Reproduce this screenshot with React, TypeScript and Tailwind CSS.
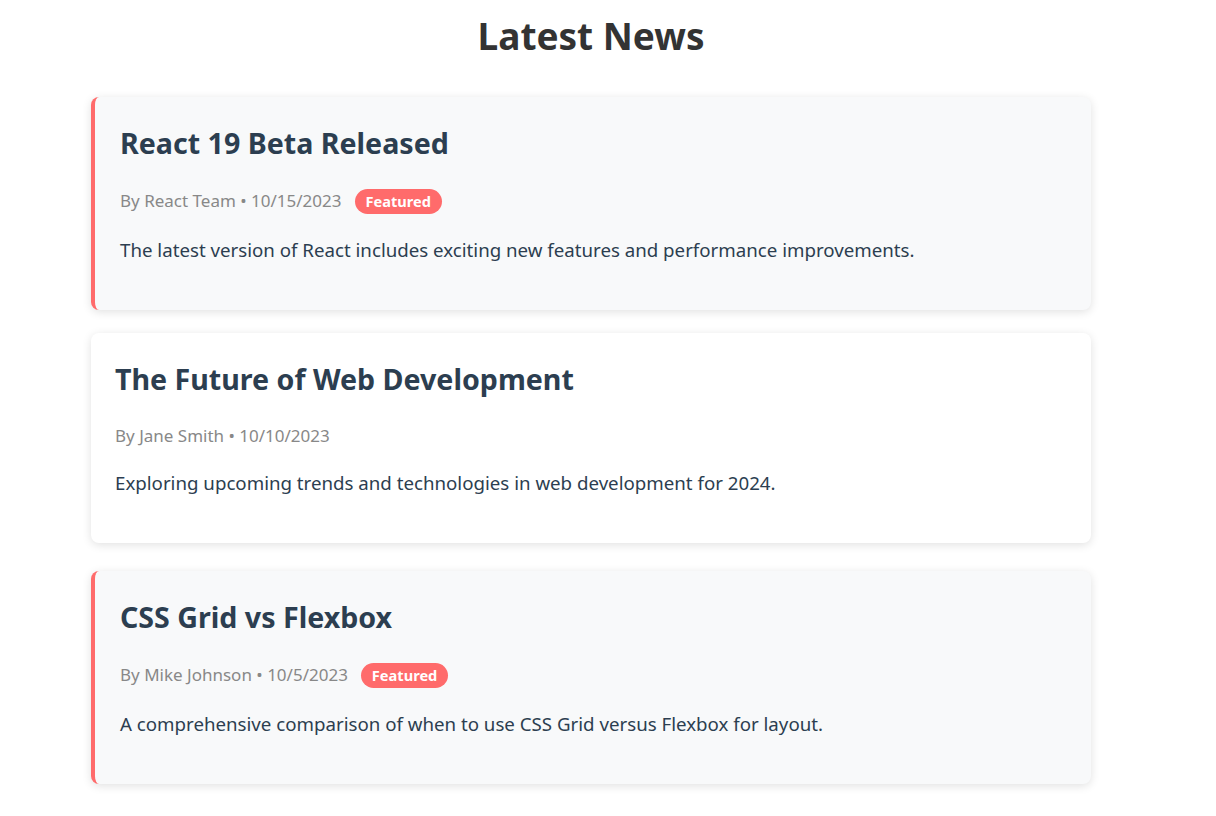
type NewsItem = {
  id: number;
  title: string;
  author: string;
  date: string;
  excerpt: string;
  featured?: boolean;
};

const news: NewsItem[] = [
  {
    id: 1,
    title: "React 19 Beta Released",
    author: "React Team",
    date: "10/15/2023",
    excerpt:
      "The latest version of React includes exciting new features and performance improvements.",
    featured: true,
  },
  {
    id: 2,
    title: "The Future of Web Development",
    author: "Jane Smith",
    date: "10/10/2023",
    excerpt: "Exploring upcoming trends and technologies in web development for 2024.",
  },
  {
    id: 3,
    title: "CSS Grid vs Flexbox",
    author: "Mike Johnson",
    date: "10/5/2023",
    excerpt:
      "A comprehensive comparison of when to use CSS Grid versus Flexbox for layout.",
    featured: true,
  },
];

function NewsCard({ item }: { item: NewsItem }) {
  const featured = item.featured;
  return (
    <article
      className={
        featured
          ? "rounded-lg border-l-4 border-[#ff6b6b] bg-[#f8f9fa] pt-[24px] pb-[46px] pl-[25px] pr-6 shadow-[0_2px_10px_rgba(0,0,0,0.12)]"
          : "rounded-lg bg-white pt-[24px] pb-[46px] pl-6 pr-6 shadow-[0_2px_10px_rgba(0,0,0,0.12)]"
      }
    >
      <h2 className="text-[28.6px] leading-[44px] font-bold text-[#2c3e50]">{item.title}</h2>
      <div
        className={
          "mt-[23px] flex items-center gap-[13px] text-[17px] text-[#888] " +
          (featured ? "h-[26px]" : "h-[23px]")
        }
      >
        <span>
          By {item.author} • {item.date}
        </span>
        {featured && (
          <span className="rounded-full bg-[#ff6b6b] px-[11px] py-[2px] text-[14.6px] leading-[21px] font-bold text-white">
            Featured
          </span>
        )}
      </div>
      <p className="mt-[22px] text-[18.7px] leading-[28px] text-[#2c3e50]">{item.excerpt}</p>
    </article>
  );
}

export default function App() {
  return (
    <div
      className="min-h-screen bg-white pl-[91px] pt-[11px]"
      style={{ fontFamily: '"Noto Sans", "Open Sans", sans-serif' }}
    >
      <div className="w-[1000px]">
        <h1 className="text-center text-[37px] leading-[50px] font-bold text-[#333]">Latest News</h1>
        <div className="mt-[36px] flex flex-col">
          {news.map((item, i) => (
            <div key={item.id} className={i === 0 ? "" : i === 1 ? "mt-[23px]" : "mt-[28px]"}>
              <NewsCard item={item} />
            </div>
          ))}
        </div>
      </div>
    </div>
  );
}
